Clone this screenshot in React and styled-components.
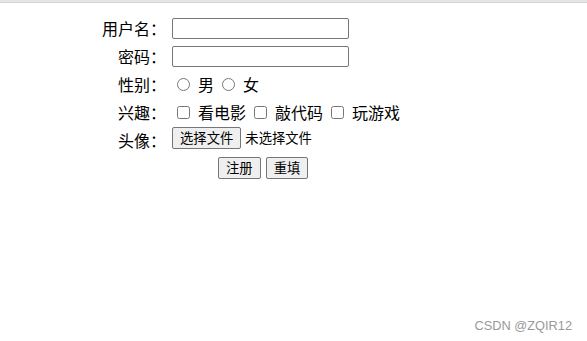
import styled, { createGlobalStyle } from "styled-components";

const Global = createGlobalStyle`
  html, body {
    margin: 0;
    padding: 0;
    background: #fff;
  }
  body {
    font-family: "Noto Sans CJK SC", "Liberation Sans", sans-serif;
    color: #000;
  }
`;

const Page = styled.div`
  position: relative;
  width: 587px;
  height: 341px;
  overflow: hidden;
`;

const TopBar = styled.div`
  height: 2px;
  background: #e6e6e6;
  border-bottom: 1px solid #d4d4d4;
`;

const Form = styled.form`
  display: grid;
  grid-template-columns: 166px auto;
  grid-auto-rows: 28px;
  column-gap: 6px;
  padding-top: 11px;
  font-size: 16px;
`;

const Label = styled.div`
  display: flex;
  align-items: center;
  justify-content: flex-end;
  white-space: nowrap;
  line-height: 1;
`;

const Cell = styled.div`
  display: flex;
  align-items: center;
  white-space: nowrap;
  line-height: 1;
`;

const TextInput = styled.input`
  box-sizing: border-box;
  width: 177px;
  height: 21px;
  margin: 0;
  padding: 1px 2px;
  border: 1px solid #767676;
  border-radius: 2px;
  font-size: 13px;
`;

const Choice = styled.input`
  flex: none;
  width: 13px;
  height: 13px;
  margin: 1px 0 0 5px;
`;

const ChoiceText = styled.span`
  margin: 0 3px 0 8px;
`;

const Btn = styled.button`
  box-sizing: border-box;
  height: 22px;
  padding: 0 7px;
  margin: 0;
  font-family: "Noto Sans CJK SC", sans-serif;
  font-size: 13.33px;
  line-height: 1;
  color: #000;
  background: #efefef;
  border: 1px solid #767676;
  border-radius: 2px;
`;

const FileNote = styled.span`
  font-size: 13.33px;
  margin-left: 4px;
`;

const FileRow = styled(Cell)`
  padding-bottom: 4px;
`;

const Actions = styled.div`
  grid-column: 1 / span 2;
  display: flex;
  align-items: center;
  gap: 5px;
  padding-left: 218px;
`;

const Mark = styled.div`
  position: absolute;
  right: 15px;
  bottom: 8px;
  font-family: "Liberation Sans", sans-serif;
  font-size: 12.8px;
  color: #999;
`;

const App = () => {
  return (
    <>
      <Global />
      <Page>
        <TopBar />
        <Form onSubmit={(e) => e.preventDefault()}>
          <Label>用户名：</Label>
          <Cell>
            <TextInput type="text" />
          </Cell>

          <Label>密码：</Label>
          <Cell>
            <TextInput type="password" />
          </Cell>

          <Label>性别：</Label>
          <Cell>
            <Choice type="radio" name="sex" />
            <ChoiceText>男</ChoiceText>
            <Choice type="radio" name="sex" />
            <ChoiceText>女</ChoiceText>
          </Cell>

          <Label>兴趣：</Label>
          <Cell>
            <Choice type="checkbox" />
            <ChoiceText>看电影</ChoiceText>
            <Choice type="checkbox" />
            <ChoiceText>敲代码</ChoiceText>
            <Choice type="checkbox" />
            <ChoiceText>玩游戏</ChoiceText>
          </Cell>

          <Label>头像：</Label>
          <FileRow>
            <Btn type="button">选择文件</Btn>
            <FileNote>未选择文件</FileNote>
          </FileRow>

          <Actions>
            <Btn type="submit">注册</Btn>
            <Btn type="reset">重填</Btn>
          </Actions>
        </Form>
        <Mark>CSDN @ZQIR12</Mark>
      </Page>
    </>
  );
};

export default App;
